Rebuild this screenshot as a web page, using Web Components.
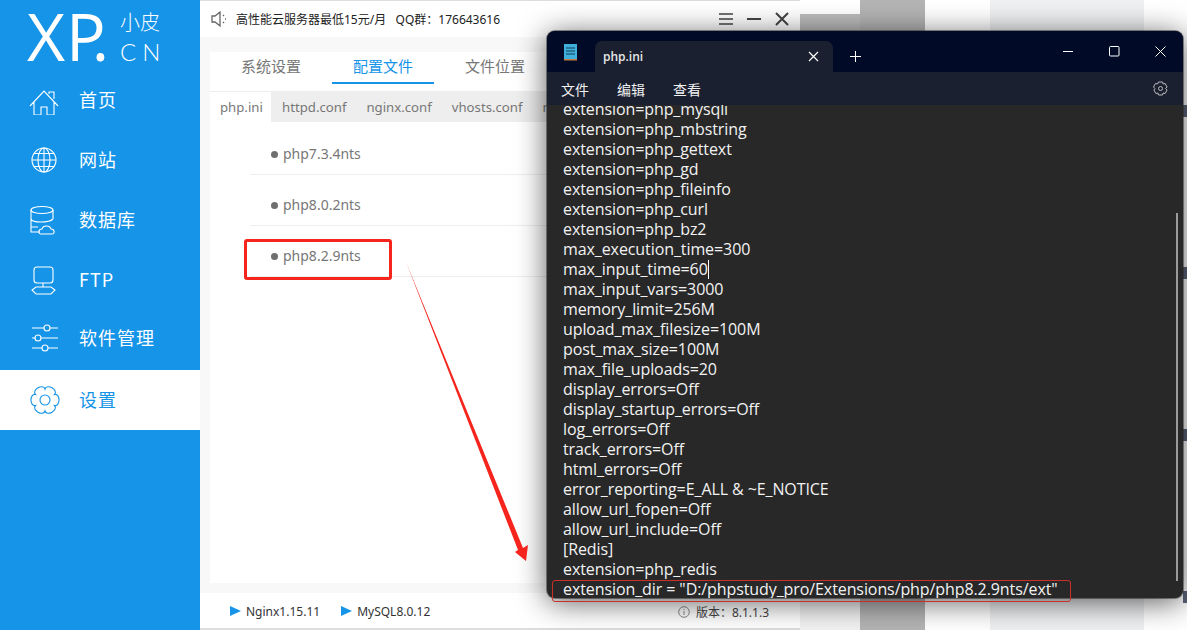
<!DOCTYPE html>
<html lang="zh">
<head>
<meta charset="utf-8">
<title>php.ini</title>
<style>
  html, body { margin: 0; height: 100%; overflow: hidden; background: #fff; }
  body { font-family: "Noto Sans", "Noto Sans CJK SC", sans-serif; }
  #desk { position: relative; display: flex; width: 1187px; height: 630px; overflow: hidden; }
</style>
</head>
<body>
<div id="desk">
  <xp-sidebar></xp-sidebar>
  <xp-panel></xp-panel>
  <xp-backdrop></xp-backdrop>
  <note-window></note-window>
  <xp-marks></xp-marks>
</div>

<script>
// six rounded lobes round the centre
function gearPath() {
  const pt = (deg, r) => {
    const a = deg * Math.PI / 180;
    return (15 + r * Math.cos(a)).toFixed(2) + ' ' + (15 + r * Math.sin(a)).toFixed(2);
  };
  let d = 'M' + pt(-30, 11);
  for (let k = 0; k < 6; k++) {
    d += 'C' + pt(k * 60 - 24, 17) + ' ' + pt(k * 60 + 24, 17) + ' ' + pt(k * 60 + 30, 11);
  }
  return d + 'z';
}

const ICONS = {
  home: '<path d="M1 21 15 6l14 15M5 17v13h7v-8h6v8h7V17M20 9V7h5v7"/>',
  web: '<circle cx="15" cy="15" r="12"/><ellipse cx="15" cy="15" rx="6" ry="12"/><path d="M15 3v24M3 15h24M5 8.500h20M5 21.500h20"/>',
  db: '<ellipse cx="13" cy="5" rx="11" ry="3.500"/><path d="M2 5v22h9M24 5v9M2 14c1 4 18 4 22 0M2 22h7"/><path d="M12 29c-3 0-3-5 1-5 1-4 8-4 9 0 4 0 4 5 1 5z"/>',
  ftp: '<rect x="5" y="2" width="19" height="16" rx="3"/><path d="M14 18v4M7 22h15l4 3-4 4H7l-4-4z"/>',
  tune: '<path d="M3 5h12M21 5h8M3 15h3M12 15h17M3 25h10M19 25h10"/><circle cx="18" cy="5" r="3"/><circle cx="9" cy="15" r="3"/><circle cx="16" cy="25" r="3"/>',
  gear: `<path d="${gearPath()}"/><circle cx="15" cy="15" r="5"/>`
};

class XpNav extends HTMLElement {
  constructor() {
    super();
    this.attachShadow({ mode: 'open' }).innerHTML = `
      <style>
        :host { display: flex; align-items: center; height: 60px; padding-left: 29px; color: #fff; box-sizing: border-box; }
        :host([active]) { background: #fff; color: #1594e8; padding-left: 30px; }
        :host([active]) span { margin-left: 19px; }
        svg { width: 30px; height: 30px; fill: none; stroke: currentColor; stroke-width: 1.100; flex: none; }
        span { margin: 0 0 2px 20px; font: 18px/1 "Noto Sans CJK SC", "Noto Sans", sans-serif; letter-spacing: 1px; }
      </style>
      <svg viewBox="0 0 30 30">${ICONS[this.getAttribute('icon')]}</svg>
      <span><slot></slot></span>`;
  }
}
customElements.define('xp-nav', XpNav);

class XpSidebar extends HTMLElement {
  constructor() {
    super();
    this.attachShadow({ mode: 'open' }).innerHTML = `
      <style>
        :host { display: block; flex: none; width: 200px; height: 630px; background: #1594e8; color: #fff; }
        .logo { display: flex; height: 70px; padding-left: 27px; box-sizing: border-box; }
        .xp { width: 93px; flex: none; font: 400 66px/70px "Open Sans", sans-serif; letter-spacing: 1px; white-space: nowrap; }
        .xp span { margin-left: -15px; }
        .cn { padding-top: 11px; font: 300 20px/1.100 "Noto Sans CJK SC", sans-serif; }
        .cn div + div { margin-top: 6px; font: 300 24px/1.100 Lato, sans-serif; letter-spacing: 6px; white-space: nowrap; }
      </style>
      <div class="logo">
        <div class="xp">XP<span>.</span></div>
        <div class="cn"><div>小皮</div><div>CN</div></div>
      </div>
      <xp-nav icon="home">首页</xp-nav>
      <xp-nav icon="web">网站</xp-nav>
      <xp-nav icon="db">数据库</xp-nav>
      <xp-nav icon="ftp">FTP</xp-nav>
      <xp-nav icon="tune" style="padding-bottom:4px">软件管理</xp-nav>
      <xp-nav icon="gear" active>设置</xp-nav>`;
  }
}
customElements.define('xp-sidebar', XpSidebar);

class XpPanel extends HTMLElement {
  constructor() {
    super();
    this.attachShadow({ mode: 'open' }).innerHTML = `
      <style>
        :host { display: flex; flex-direction: column; flex: none; width: 600px; height: 630px; background: #f8f8f8; color: #777;
                font-family: "Noto Sans", "Noto Sans CJK SC", sans-serif; }
        .top { display: flex; align-items: center; height: 36px; padding-left: 11px; background: #fff; border-top: 1px solid #ddd; color: #222; font-size: 12px; }
        .top .msg { margin-left: 9px; flex: 1; white-space: pre; }
        .top svg { flex: none; }
        .ctl { display: flex; gap: 12px; padding-right: 10px; }
        .ctl svg { width: 16px; height: 16px; fill: none; stroke: #444; stroke-width: 1.500; }
        .card { display: flex; flex-direction: column; flex: 1; margin: 15px 0 10px 10px; background: #fff; min-height: 0; }
        .tabs { display: flex; gap: 10px; height: 40px; padding-left: 10px; border-bottom: 1px solid #eee; box-sizing: border-box; flex: none; }
        .tabs div { width: 102px; text-align: center; font-size: 15px; line-height: 29px; height: 30px; }
        .tabs .on { color: #1594e8; border-bottom: 2px solid #1594e8; }
        .subs { display: flex; flex: none; height: 30px; background: #eee; font-size: 13.200px; line-height: 31px; overflow: hidden; white-space: nowrap; }
        .subs div { padding: 0 10px; }
        .subs .on { background: #fff; width: 41px; margin-right: 1px; }
        .list { padding-left: 40px; font-size: 14px; margin-top: 2px; }
        .row { height: 51px; line-height: 60px; padding-left: 21px; border-bottom: 1px solid #eee; box-sizing: border-box; }
        .row::before { content: ""; display: inline-block; width: 7px; height: 7px; border-radius: 50%; background: #6f6f6f; margin-right: 5px; vertical-align: 1px; }
        .foot { display: flex; align-items: center; height: 33px; padding: 2px 31px 0 30px; background: #fff; border-bottom: 2px solid #ddd; color: #333; font-size: 12px; }
        .foot i { width: 0; height: 0; border-left: 11px solid #1594e8; border-top: 5.500px solid transparent; border-bottom: 5.500px solid transparent; margin: 0 5px 2px 0; }
        .foot span { margin-right: 21px; }
        .ver { margin-left: auto; display: flex; align-items: center; gap: 6px; color: #444; }
        .ver svg { width: 12px; height: 12px; fill: none; stroke: #888; }
      </style>
      <div class="top">
        <svg width="16" height="18" viewBox="0 0 16 18" fill="none" stroke="#666" stroke-width="1.300"><path d="M1 6h3l5-4v14l-5-4H1zM12 5l1 1M14 9h1M12 13l1-1"/></svg>
        <div class="msg">高性能云服务器最低15元/月   QQ群：176643616</div>
        <div class="ctl">
          <svg viewBox="0 0 16 16"><path d="M1 3h14M1 8h14M1 13h14"/></svg>
          <svg viewBox="0 0 16 16"><path d="M1 8h14" stroke-width="2"/></svg>
          <svg viewBox="0 0 16 16"><path d="M2 2l12 12M14 2 2 14" stroke-width="2"/></svg>
        </div>
      </div>
      <div class="card">
        <div class="tabs"><div>系统设置</div><div class="on">配置文件</div><div>文件位置</div></div>
        <div class="subs">
          <div class="on">php.ini</div><div>httpd.conf</div><div>nginx.conf</div><div>vhosts.conf</div><div>mysql.ini</div>
        </div>
        <div class="list">
          <div class="row">php7.3.4nts</div>
          <div class="row">php8.0.2nts</div>
          <div class="row">php8.2.9nts</div>
        </div>
      </div>
      <div class="foot"><i></i><span>Nginx1.15.11</span><i></i><span>MySQL8.0.12</span>
        <div class="ver">
          <svg viewBox="0 0 12 12"><circle cx="6" cy="6" r="5.300"/><path d="M6 5v4M6 3v1"/></svg>
          版本：8.1.1.3
        </div>
      </div>`;
  }
}
customElements.define('xp-panel', XpPanel);

// what shows behind the notepad window, on the right of the app
class XpBackdrop extends HTMLElement {
  constructor() {
    super();
    this.attachShadow({ mode: 'open' }).innerHTML = `
      <style>
        :host { display: flex; flex: 1; height: 630px; }
        div { height: 100%; }
        .a { width: 60px; background: linear-gradient(#fff 14px, #bbb 14px, #bbb 300px, #f2f2f2 300px); }
        .b { width: 65px; background: #b4b4b4; }
        .c { width: 65px; background: #fff; }
        .d { width: 154px; background: #eff0f2; }
        .e { flex: 1; background: #fff; display: flex; justify-content: flex-end; }
        .frag { width: 4px; background: repeating-linear-gradient(transparent 0 105px, #5b6478 105px 117px, transparent 117px 162px); }
      </style>
      <div class="a"></div><div class="b"></div><div class="c"></div><div class="d"></div><div class="e"><div class="frag"></div></div>`;
  }
}
customElements.define('xp-backdrop', XpBackdrop);

// red annotations drawn over the screenshot
class XpMarks extends HTMLElement {
  constructor() {
    super();
    this.attachShadow({ mode: 'open' }).innerHTML = `
      <style>
        :host { position: absolute; left: 0; top: 0; width: 1187px; height: 630px; z-index: 2; pointer-events: none; }
        .box { position: absolute; left: 244px; top: 239px; width: 142px; height: 35px; border: 3px solid #f5241c; border-radius: 3px; }
        .hl { position: absolute; left: 552px; top: 580px; width: 517px; height: 20px; border: 1.500px solid #c8302c; border-radius: 3px; }
        svg { position: absolute; left: 0; top: 0; }
      </style>
      <div class="box"></div>
      <div class="hl"></div>
      <svg width="547" height="630"><polygon points="406,262 523,548 528,545 526,561 515,552 518,550" fill="#f5241c"/></svg>`;
  }
}
customElements.define('xp-marks', XpMarks);

const INI = `extension=php_mysqli
extension=php_mbstring
extension=php_gettext
extension=php_gd
extension=php_fileinfo
extension=php_curl
extension=php_bz2
max_execution_time=300
max_input_time=60
max_input_vars=3000
memory_limit=256M
upload_max_filesize=100M
post_max_size=100M
max_file_uploads=20
display_errors=Off
display_startup_errors=Off
log_errors=Off
track_errors=Off
html_errors=Off
error_reporting=E_ALL & ~E_NOTICE
allow_url_fopen=Off
allow_url_include=Off
[Redis]
extension=php_redis
extension_dir = "D:/phpstudy_pro/Extensions/php/php8.2.9nts/ext"`;

class NoteWindow extends HTMLElement {
  constructor() {
    super();
    const lines = INI.split('\n').map(l => {
      const esc = l.replace(/&/g, '&amp;');
      if (l === 'max_input_time=60') return `<div>${esc}<b class="caret"></b></div>`;
      return `<div>${esc}</div>`;
    }).join('');
    this.attachShadow({ mode: 'open' }).innerHTML = `
      <style>
        :host { position: absolute; left: 547px; top: 31px; width: 636px; height: 567px; z-index: 1; display: flex; flex-direction: column;
                background: #282828; border-radius: 8px; color: #fff; box-shadow: 0 4px 30px rgba(0,0,0,.65), 0 0 0 1px rgba(60,60,60,.5);
                font-family: "Open Sans", "Noto Sans CJK SC", sans-serif; }
        .title { display: flex; align-items: flex-end; height: 41px; flex: none; background: #010a26; border-radius: 8px 8px 0 0; }
        .ico { width: 48px; height: 41px; display: flex; align-items: center; justify-content: center; flex: none; }
        .tab { display: flex; align-items: center; justify-content: space-between; width: 238px; height: 31px; box-sizing: border-box; padding: 0 14px 0 8px;
               background: #1b2030; border-radius: 7px 7px 0 0; font-size: 12px; font-weight: 600; color: #e8e8e8; }
        .plus { width: 44px; height: 31px; display: flex; align-items: center; justify-content: center; flex: none; }
        .btns { margin-left: auto; display: flex; height: 41px; }
        .btns div { width: 46px; display: flex; align-items: center; justify-content: center; }
        svg { fill: none; stroke: #fff; }
        .menu { display: flex; align-items: center; height: 33px; flex: none; background: #1b2030; padding-left: 14px; font: 14px "Noto Sans CJK SC", sans-serif; gap: 28px; color: #f0f0f0; }
        .menu svg { margin-left: auto; margin-right: 15px; stroke: #bbb; }
        .text { position: relative; flex: 1; overflow: hidden; padding-left: 16px; font-size: 16px; line-height: 20px; letter-spacing: -0.090px; color: #f2f2f2; border-radius: 0 0 8px 8px; }
        .lines { margin-top: -6px; white-space: pre; }
        .caret { display: inline-block; width: 1px; height: 19px; background: #fff; vertical-align: -4px; }
        .bar { position: absolute; right: 5px; top: 108px; width: 2px; height: 368px; background: #9a9a9a; }
      </style>
      <div class="title">
        <div class="ico">
          <svg width="16" height="18" viewBox="0 0 16 18" style="stroke:none"><rect x="1" y="1" width="13" height="16" fill="#3fb0dc"/><rect x="1" y="16" width="13" height="1.500" fill="#c77a3c"/><path d="M3 5h9M3 8h9M3 11h9" stroke="#123b52" stroke-width="1"/></svg>
        </div>
        <div class="tab">php.ini
          <svg width="11" height="11" viewBox="0 0 11 11" stroke-width="1.200"><path d="M1 1l9 9M10 1 1 10"/></svg>
        </div>
        <div class="plus"><svg width="11" height="11" viewBox="0 0 11 11"><path d="M5.500 0v11M0 5.500h11"/></svg></div>
        <div class="btns" style="align-self:flex-start">
          <div><svg width="11" height="11" viewBox="0 0 11 11"><path d="M0 5.500h10"/></svg></div>
          <div><svg width="11" height="11" viewBox="0 0 11 11"><rect x=".5" y=".5" width="9.500" height="9.500" rx="1"/></svg></div>
          <div><svg width="11" height="11" viewBox="0 0 11 11"><path d="M.5.500l10 10M10.500.500l-10 10"/></svg></div>
        </div>
      </div>
      <div class="menu"><span>文件</span><span>编辑</span><span>查看</span>
        <svg width="15" height="15" viewBox="0 0 15 15"><path d="M5.500 1h4l.6 2 2-.5 2 3.500-1.500 1.500 1.500 1.500-2 3.500-2-.5-.6 2h-4l-.6-2-2 .5-2-3.500L2 7.500.500 6l2-3.500 2 .5z"/><circle cx="7.500" cy="7.500" r="2"/></svg>
      </div>
      <div class="text">
        <div class="lines">${lines}</div>
        <div class="bar"></div>
      </div>`;
  }
}
customElements.define('note-window', NoteWindow);
</script>
</body>
</html>
